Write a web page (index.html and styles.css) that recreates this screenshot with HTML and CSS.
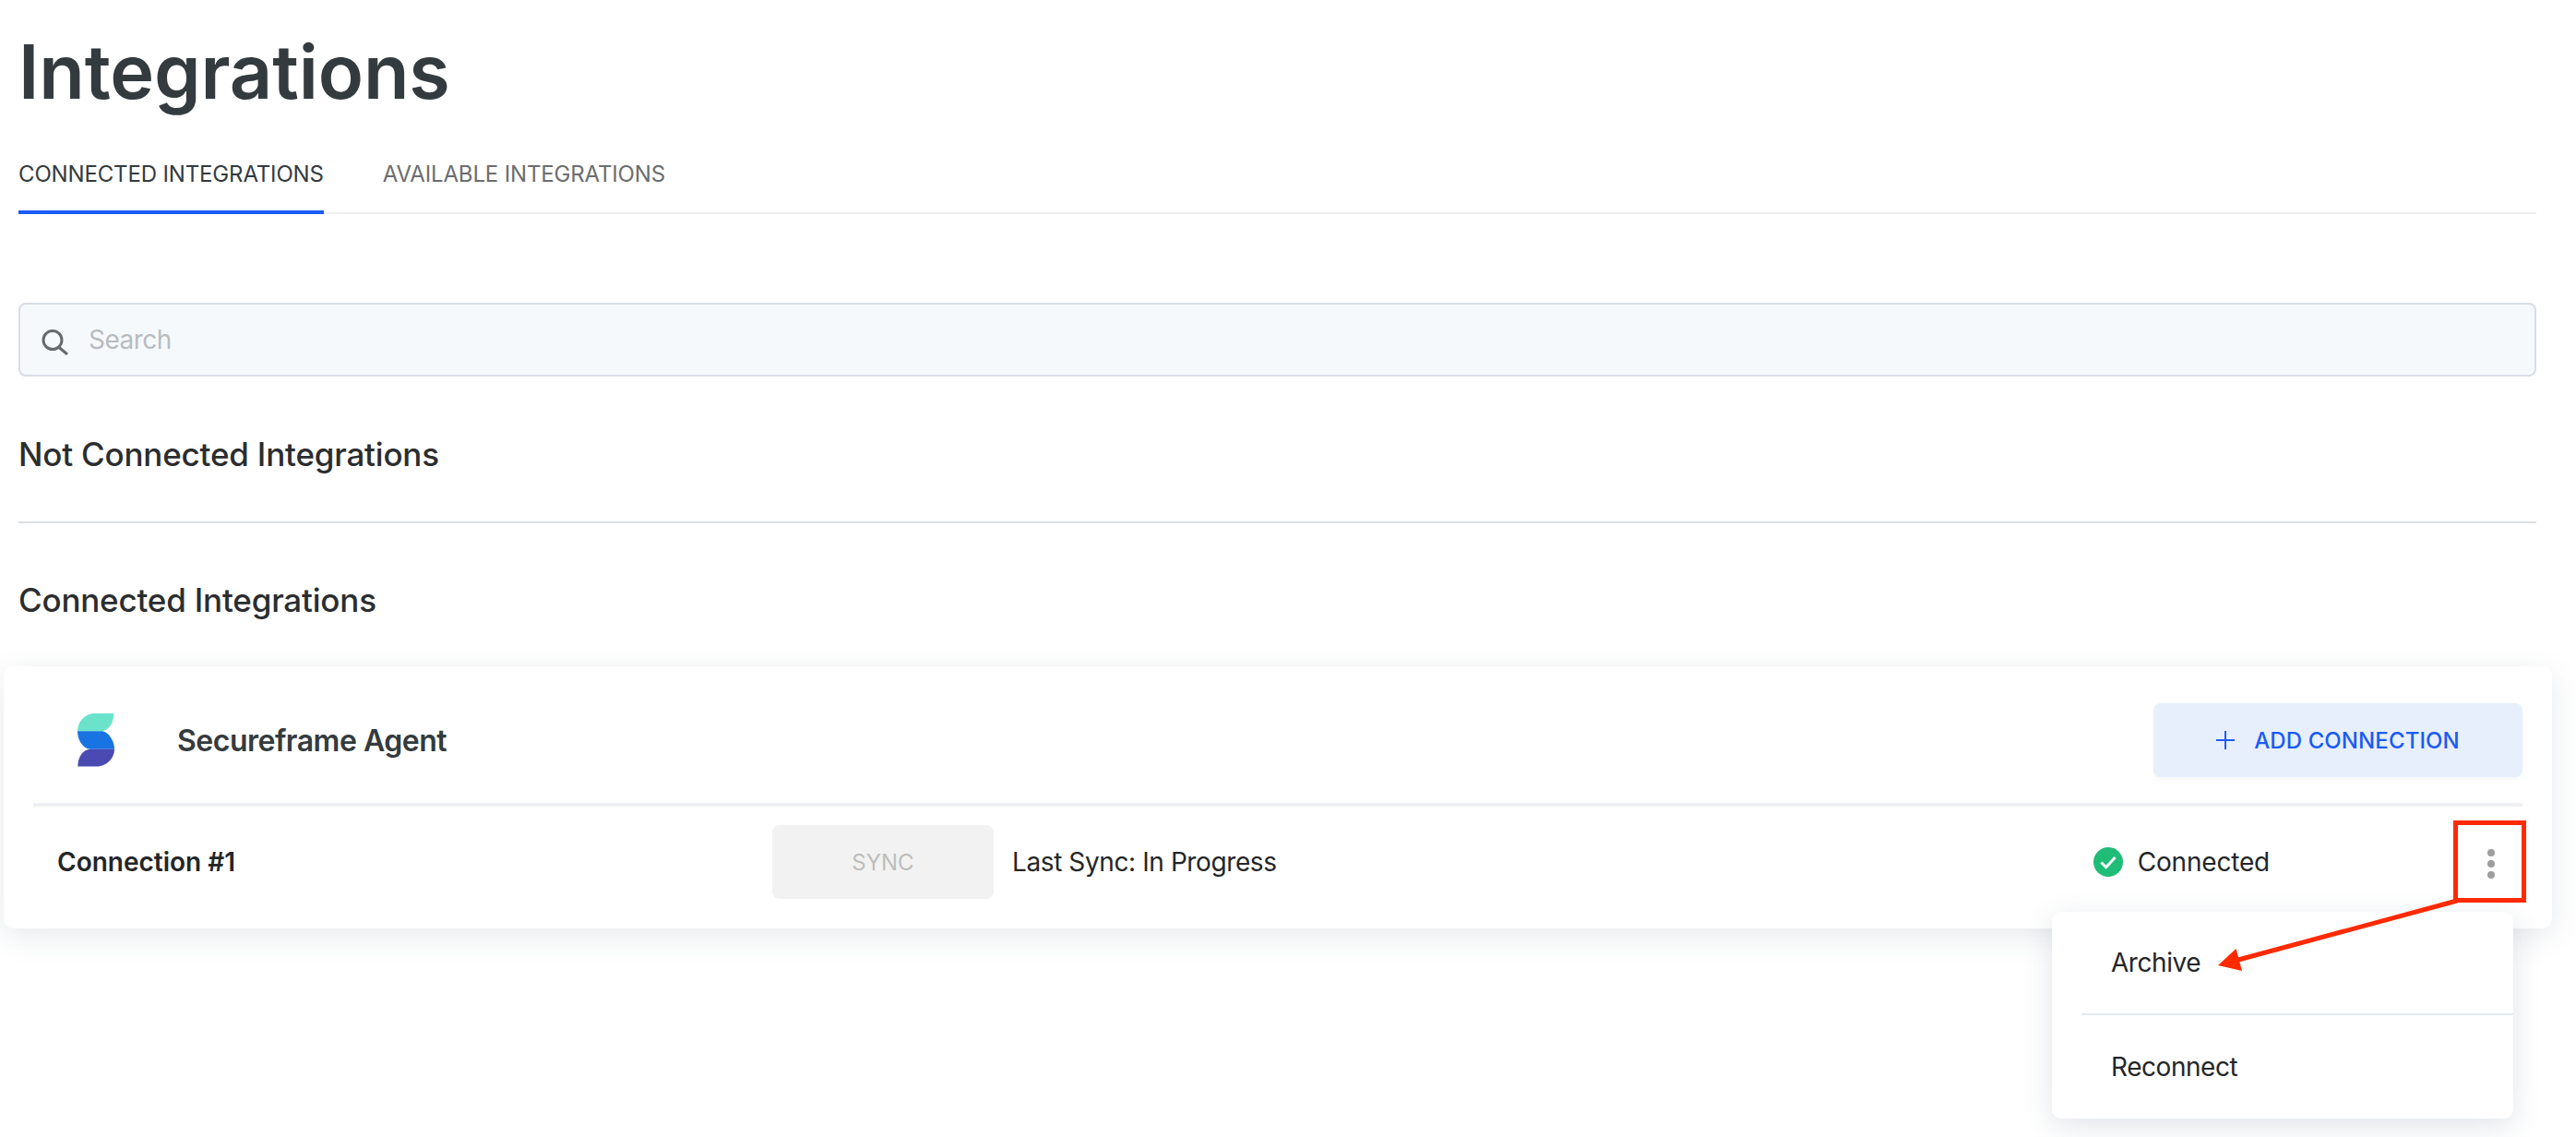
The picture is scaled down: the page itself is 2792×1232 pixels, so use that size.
FILE: index.html
```html
<!DOCTYPE html>
<html lang="en">
<head>
<meta charset="utf-8">
<title>Integrations</title>
<link rel="stylesheet" href="styles.css">
</head>
<body>
<main class="page">
  <h1 class="title">Integrations</h1>
  <nav class="tabs">
    <a class="tab tab-active">CONNECTED INTEGRATIONS</a>
    <a class="tab">AVAILABLE INTEGRATIONS</a>
  </nav>
  <div class="search">
    <svg class="search-icon" viewBox="0 0 30 28" aria-hidden="true"><ellipse cx="12" cy="11.5" rx="10" ry="10"/><path d="M18.5 19L28 27"/></svg>
    <span class="search-placeholder">Search</span>
  </div>
  <h2 class="section-heading section-first">Not Connected Integrations</h2>
  <hr class="section-rule">
  <h2 class="section-heading section-second">Connected Integrations</h2>
  <section class="card">
    <header class="card-head">
      <svg class="logo" viewBox="0 0 40 58" aria-hidden="true">
        <path fill="#6be3cb" d="M39.3 0H19C8 0 0 9 0 19.3H25.7C33 19.3 39.3 11 39.3 0Z"/>
        <path fill="#1874e2" d="M0 19.3H25.7C33.5 19.3 40 30 40 38.7H14C6 38.7 0 29 0 19.3Z"/>
        <path fill="#4b4ab2" d="M40 38.7H14C6 38.7.3 47 .3 57.6H20C31 57.6 40 49 40 38.7Z"/>
      </svg>
      <span class="card-name">Secureframe Agent</span>
      <button class="add-btn">
        <svg class="plus" viewBox="0 0 20 20" aria-hidden="true"><path d="M10 0v20M0 10h20"/></svg>
        <span>ADD CONNECTION</span>
      </button>
    </header>
    <div class="conn-row">
      <span class="conn-name">Connection #1</span>
      <button class="sync-btn">SYNC</button>
      <span class="last-sync">Last Sync: In Progress</span>
      <span class="status">
        <svg class="check" viewBox="0 0 32 32" aria-hidden="true"><circle cx="16" cy="16" r="16" fill="#1fbd78"/><path d="M8.5 16.5l5.2 5.2L23.5 11" fill="none" stroke="#fff" stroke-width="3"/></svg>
        Connected
      </span>
      <span class="kebab"><i></i><i></i><i></i></span>
    </div>
  </section>
</main>
<div class="menu">
  <div class="menu-item">Archive</div>
  <div class="menu-item menu-item-last">Reconnect</div>
</div>
<svg class="annotation" viewBox="0 0 2792 1232" aria-hidden="true">
  <rect x="2661.5" y="891.5" width="74" height="84" fill="none" stroke="#ff2a00" stroke-width="5"/>
  <path d="M2663 976L2426 1040" fill="none" stroke="#ff2a00" stroke-width="5"/>
  <path d="M2404 1046L2423.5 1028L2430 1052Z" fill="#ff2a00"/>
</svg>
</body>
</html>
```
FILE: styles.css
```css
* { box-sizing: border-box; }
html, body { margin: 0; padding: 0; background: #fff; }
body {
  position: relative;
  width: 2792px;
  height: 1232px;
  overflow: hidden;
  font-family: Inter, "Liberation Sans", sans-serif;
  color: #242628;
}
.page { padding: 0 43px 0 20px; }
.title {
  margin: 0;
  padding-top: 28px;
  font-size: 81px;
  line-height: 100px;
  font-weight: 600;
  letter-spacing: -.15px;
  color: #343b3e;
}
.tabs {
  display: flex;
  gap: 64px;
  margin-top: 32px;
  height: 72px;
  border-bottom: 2px solid #eeeff1;
}
.tab {
  height: 72px;
  padding-top: 13px;
  font-size: 24px;
  line-height: 32px;
  letter-spacing: -.15px;
  color: #6b6d6e;
}
.tab-active {
  color: #343b3e;
  border-bottom: 4px solid #1a5cf4;
}
.search {
  display: flex;
  align-items: center;
  height: 80px;
  margin-top: 96px;
  padding-left: 23px;
  background: #f6f9fc;
  border: 2px solid #d8dde5;
  border-radius: 8px;
}
.search-icon { width: 30px; height: 28px; margin-top: 6px; fill: none; stroke: #666a6d; stroke-width: 3; }
.search-placeholder { margin-left: 21px; font-size: 28px; letter-spacing: -.5px; color: #b8bcbf; }
.section-heading {
  margin: 0;
  font-size: 35px;
  line-height: 44px;
  letter-spacing: -.2px;
  font-weight: 500;
  color: #2b2d2f;
}
.section-first { margin-top: 62px; }
.section-rule { margin: 51px 0 0; border: 0; border-top: 2px solid #dcdfe3; }
.section-second { margin-top: 61px; }
.card {
  margin: 50px -17px 0 -16px;
  height: 284px;
  padding: 0 32px;
  background: #fff;
  border-radius: 10px;
  box-shadow: 0 8px 32px rgba(60, 85, 110, .13);
}
.card-head {
  display: flex;
  align-items: center;
  height: 152px;
  border-bottom: 4px solid #eff0f4;
  padding: 12px 0 0 48px;
}
.logo { width: 40px; height: 58px; flex: none; }
.card-name {
  margin-left: 68px;
  font-size: 32px;
  font-weight: 600;
  letter-spacing: -.5px;
  color: #343b3e;
}
.add-btn {
  margin-left: auto;
  display: flex;
  align-items: center;
  justify-content: center;
  gap: 21px;
  width: 400px;
  height: 80px;
  border: 0;
  border-radius: 8px;
  background: #e8effc;
  color: #1a5cf4;
  font: 500 24px Inter, "Liberation Sans", sans-serif;
  letter-spacing: .1px;
  box-shadow: 0 2px 4px rgba(60, 85, 110, .06);
}
.plus { width: 20px; height: 20px; stroke: #1a5cf4; stroke-width: 2; fill: none; }
.conn-row {
  display: flex;
  align-items: center;
  height: 120px;
  padding-left: 26px;
}
.conn-name { width: 775px; font-size: 28px; font-weight: 600; }
.sync-btn {
  width: 240px;
  height: 80px;
  border: 0;
  border-radius: 8px;
  background: #f2f2f2;
  color: #bdbdbd;
  font: 400 24px Inter, "Liberation Sans", sans-serif;
}
.last-sync { margin-left: 20px; font-size: 28px; letter-spacing: -.4px; }
.status {
  display: flex;
  align-items: center;
  gap: 16px;
  margin-left: auto;
  font-size: 28px;
  letter-spacing: -.2px;
}
.check { width: 32px; height: 32px; }
.kebab {
  display: flex;
  flex-direction: column;
  gap: 4px;
  margin: 4px 30px 0 236px;
}
.kebab i { width: 8px; height: 8px; border-radius: 50%; background: #9e9e9e; }
.menu {
  position: absolute;
  left: 2224px;
  top: 988px;
  width: 500px;
  height: 224px;
  padding-left: 32px;
  background: #fff;
  border-radius: 10px;
  box-shadow: 0 8px 32px rgba(60, 85, 110, .16);
}
.menu-item {
  display: flex;
  align-items: center;
  height: 112px;
  padding-left: 32px;
  font-size: 28px;
  letter-spacing: -.45px;
  border-bottom: 2px solid #e3ebf5;
}
.menu-item-last { height: 112px; border-bottom: 0; }
.annotation { position: absolute; left: 0; top: 0; width: 2792px; height: 1232px; pointer-events: none; }
```
